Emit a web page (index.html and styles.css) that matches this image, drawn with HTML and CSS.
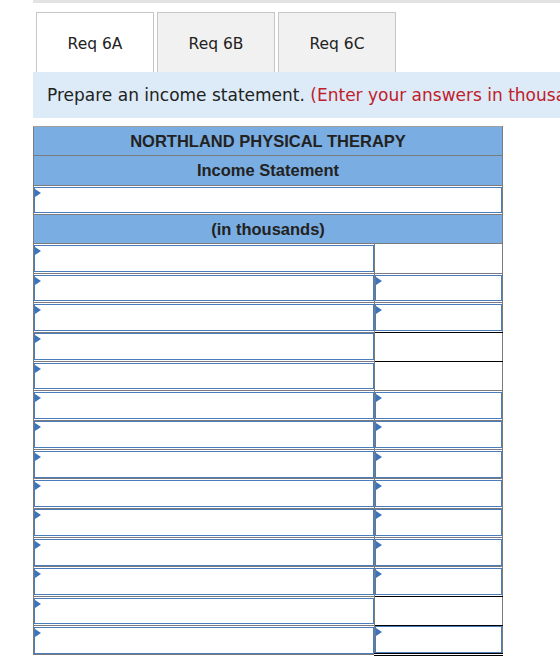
FILE: index.html
```html
<!DOCTYPE html>
<html lang="en">
<head>
<meta charset="utf-8">
<title>Income Statement</title>
<link rel="stylesheet" href="styles.css">
</head>
<body>
<div class="page">
  <div class="topline"></div>
  <div class="tabs">
    <div class="tab active">Req 6A</div>
    <div class="tab">Req 6B</div>
    <div class="tab">Req 6C</div>
  </div>
  <div class="instr">Prepare an income statement. <span class="note">(Enter your answers in thousands.)</span></div>
  <table class="sheet">
    <colgroup>
      <col class="col-label">
      <col class="col-amt">
    </colgroup>
    <tr class="head"><th colspan="2">NORTHLAND PHYSICAL THERAPY</th></tr>
    <tr class="head"><th colspan="2">Income Statement</th></tr>
    <tr><td colspan="2" class="cell"><div class="field"><input type="text"></div></td></tr>
    <tr class="head"><th colspan="2">(in thousands)</th></tr>

    <tr><td class="cell"><div class="field"><input type="text"></div></td><td></td></tr>
    <tr><td class="cell"><div class="field"><input type="text"></div></td><td class="cell"><div class="field"><input type="text"></div></td></tr>
    <tr><td class="cell"><div class="field"><input type="text"></div></td><td class="cell single"><div class="field"><input type="text"></div></td></tr>
    <tr><td class="cell"><div class="field"><input type="text"></div></td><td class="single"></td></tr>
    <tr><td class="cell"><div class="field"><input type="text"></div></td><td></td></tr>
    <tr><td class="cell"><div class="field"><input type="text"></div></td><td class="cell"><div class="field"><input type="text"></div></td></tr>
    <tr><td class="cell"><div class="field"><input type="text"></div></td><td class="cell"><div class="field"><input type="text"></div></td></tr>
    <tr><td class="cell"><div class="field"><input type="text"></div></td><td class="cell"><div class="field"><input type="text"></div></td></tr>
    <tr><td class="cell"><div class="field"><input type="text"></div></td><td class="cell"><div class="field"><input type="text"></div></td></tr>
    <tr><td class="cell"><div class="field"><input type="text"></div></td><td class="cell"><div class="field"><input type="text"></div></td></tr>
    <tr><td class="cell"><div class="field"><input type="text"></div></td><td class="cell"><div class="field"><input type="text"></div></td></tr>
    <tr><td class="cell"><div class="field"><input type="text"></div></td><td class="cell single"><div class="field"><input type="text"></div></td></tr>
    <tr><td class="cell"><div class="field"><input type="text"></div></td><td class="single"></td></tr>
    <tr><td class="cell"><div class="field"><input type="text"></div></td><td class="cell double"><div class="field"><input type="text"></div></td></tr>
  </table>
</div>
</body>
</html>
```

FILE: styles.css
```css
html, body {
  margin: 0;
  padding: 0;
  background: #fff;
}

body {
  font-family: "DejaVu Sans", Verdana, sans-serif;
  color: #222;
  overflow: hidden;
}

.page {
  padding-left: 33px;
}

.topline {
  height: 3px;
  background: #e3e3e3;
}

/* requirement tabs */
.tabs {
  display: flex;
  gap: 3px;
  margin-top: 9px;
  padding-left: 3px;
}

.tab {
  width: 116px;
  height: 56px;
  padding-top: 3px;
  border: 1px solid #c6c6c6;
  border-bottom: none;
  background: #f1f1f1;
  display: flex;
  align-items: center;
  justify-content: center;
  font-size: 15.5px;
}

.tab.active {
  background: #fff;
}

/* instruction strip */
.instr {
  height: 46px;
  line-height: 46px;
  background: #dcebf7;
  padding-left: 14px;
  font-size: 17px;
  white-space: nowrap;
  overflow: hidden;
  color: #222;
}

.note {
  color: #c0202b;
}

/* worksheet grid */
.sheet {
  margin-top: 8px;
  width: 469px;
  border-collapse: collapse;
  border: 1px solid #a0a0a0;
  table-layout: fixed;
}

.col-label {
  width: 341px;
}

.col-amt {
  width: 128px;
}

.sheet th,
.sheet td {
  border: 1px solid #7b7b7b;
  height: 29.36px;
  padding: 0;
  box-sizing: border-box;
}

.sheet tr:first-child th {
  border-top-color: #a0a0a0;
}

.head th {
  background: #7aade1;
  font-family: "Liberation Sans", Arial, sans-serif;
  font-weight: bold;
  font-size: 16.5px;
  color: #222;
  text-align: center;
  vertical-align: middle;
}

.cell {
  padding: 1px;
}

.field {
  position: relative;
  height: 26.8px;
  border: 1px solid #4a7cbc;
  box-sizing: border-box;
  background: #fff;
}

.field input {
  display: block;
  width: 100%;
  height: 100%;
  border: none;
  padding: 0 8px;
  margin: 0;
  box-sizing: border-box;
  background: transparent;
  font: 14px "Liberation Sans", Arial, sans-serif;
  outline: none;
}

/* dropdown marker at the top-left corner of each entry box */
.field::before {
  content: "";
  position: absolute;
  left: 0;
  top: 1px;
  width: 0;
  height: 0;
  border-top: 4px solid transparent;
  border-bottom: 4px solid transparent;
  border-left: 6px solid #3c74bb;
}

.single {
  border-bottom: 1px solid #000 !important;
}

.double {
  border-bottom: 3px double #000 !important;
}
```
